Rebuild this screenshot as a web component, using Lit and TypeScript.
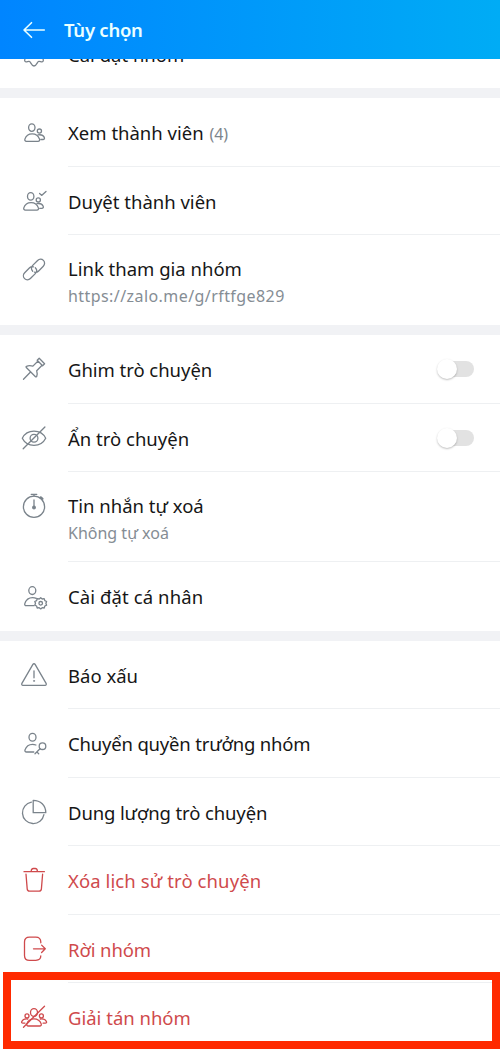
import { LitElement, html, css, svg, nothing } from "lit";
import { customElement, property } from "lit/decorators.js";

const person = (x: number, y: number) => svg`
  <ellipse cx=${11.8 + x} cy=${10.6 + y} rx="3.2" ry="3.7"/>
  <path transform="translate(${x} ${y})" d="M6.4 24.300h11.600c1.400 0 2-1 1.500-2.200-1.100-3.200-3.900-5.200-7.300-5.200s-6.300 2-7.300 5.200c-.4 1.200.3 2.200 1.500 2.200z"/>
  <circle cx=${19.4 + x} cy=${14.1 + y} r="2.1"/>
  <path transform="translate(${x} ${y})" d="M18 17.900c3.300-.6 5.400.6 6.300 2.500.5 1.200-.1 2.100-1.300 2.100h-2.200"/>`;

const icons: Record<string, unknown> = {
  settings: svg`<circle cx="14" cy="15.500" r="3.500"/><path d="M14 4.300c1.800 0 2 3.400 3.600 3.800 1.500.4 4.200-1 5.300.4 1.100 1.500-1 3-.6 4.400.3 1.200 1.400 1.400 1.400 2.900s-.9 1.900-.9 2.900c0 1.300 1.200 2.500.2 3.700-1.100 1.300-3.600-.9-4.700.1-1.200 1-1.900 4.500-4.300 4.500s-3.100-3.500-4.300-4.500c-1.100-1-3.600 1.200-4.700-.1-1-1.200.2-2.400.2-3.700 0-1-.9-1.400-.9-2.900s1.100-1.700 1.400-2.900c.4-1.400-1.700-2.900-.6-4.400 1.100-1.400 3.800 0 5.300-.4C12 7.700 12.200 4.300 14 4.300z"/>`,
  members: person(0, 0),
  approve: svg`${person(-1.1, -0.2)}<path d="M19.600 7.500l2 1.900 4.400-4"/>`,
  link: svg`<path d="M12.700 17.300c-1.700-1.700-1.700-4.200 0-5.900l4.900-4.900c1.700-1.700 4.200-1.700 5.800-.1s1.600 4.200-.1 5.900l-4.900 4.900c-1.100 1.100-2.600 1.400-3.900 1M15.300 13.700c1.700 1.700 1.700 4.200 0 5.900l-4.900 4.900c-1.700 1.700-4.200 1.700-5.800.1s-1.600-4.200.1-5.900l4.900-4.900c1.100-1.100 2.600-1.400 3.900-1"/>`,
  pin: svg`<path d="M19.200 4.300l5.400 5.400-2 2-5.400-5.400zM17.800 7.200l-4.900 4.900c-2-.6-4.700-.6-6.500.2-.5.200-.5.800-.1 1.200l9.200 9.200c.4.400 1 .3 1.200-.2.600-1.900.6-3.900 0-5.800l4.900-4.900M10.300 18.300l-6.800 6.900"/>`,
  hidden: svg`<path d="M2.300 15.200c2.400-4.800 6.600-7.100 11.700-7.100s9.300 2.300 11.700 7.100c-2.400 4.800-6.600 7.100-11.700 7.100s-9.300-2.300-11.700-7.100z"/><circle cx="14" cy="15.200" r="3.900"/><path d="M3.200 25.700L24.900 4"/>`,
  timer: svg`<circle cx="14" cy="15.800" r="10.600"/><path d="M11.200 3.300h5.600M14 3.300v1.700M14 9v7"/><path d="M20.800 6.300l1.700 1.500" stroke-width="2.200"/><circle cx="14" cy="16.500" r="1.300" fill="currentColor"/>`,
  personal: svg`<ellipse cx="12.300" cy="9.600" rx="3.500" ry="3.900"/><path d="M14 24.700H6.300c-1.200 0-1.900-.9-1.500-2.100 1.300-3.900 4.300-6 7.700-6 1.500 0 2.800.3 3.800.8"/><path d="M20.700 16.700l1.500 1.300 2-.3.600 1.900 1.800.9-.7 1.800.7 1.900-1.800.8-.6 2-2-.3-1.500 1.200-1.500-1.200-2 .3-.6-2-1.800-.8.700-1.900-.7-1.800 1.800-.9.600-1.900 2 .3z"/><circle cx="20.700" cy="22.300" r="1.800"/>`,
  report: svg`<path d="M12.900 4.400c.5-.9 1.700-.9 2.200 0l11 19c.5.900 0 1.900-1 1.900H2.900c-1 0-1.500-1-1-1.900zM14 10.800v7"/><circle cx="14" cy="20.900" r=".6" fill="currentColor" stroke-width=".6"/>`,
  transfer: svg`<ellipse cx="12.500" cy="9.200" rx="3.500" ry="3.900"/><path d="M13.800 24H6.500c-1.200 0-1.900-.9-1.500-2.100 1.300-3.800 4.200-5.600 7.500-5.600 1.300 0 2.300.2 3.400.7"/><circle cx="22.500" cy="18.200" r="3.300"/><path d="M20 20.700l-5 5M16.800 23.900l1.900 1.900"/>`,
  storage: svg`<path d="M11.400 5.100a10.800 10.800 0 1 0 12.500 12.500M13.200 3.300v12.400h12.600C25.800 8.500 20.500 3.300 13.200 3.300z"/>`,
  trash: svg`<path d="M4 6.700h20.400M11.200 6.500c0-2 .8-3 2.200-3h1.800c1.400 0 2.200 1 2.200 3M6 9.200l1.200 14.700c.1 1.400 1 2.200 2.300 2.200h9.600c1.300 0 2.200-.8 2.300-2.200L22.600 9.200"/>`,
  leave: svg`<path d="M20.800 8.800V8c0-3.200-1.800-4.900-5-4.900H9.500c-3.200 0-5 1.700-5 4.900v13.400c0 3.200 1.800 4.900 5 4.900h6.300c3.200 0 5-1.700 5-4.500M13.500 14.800h11.800M21.600 11.100l3.700 3.700-3.700 3.700"/>`,
  disband: svg`<ellipse cx="14" cy="10.500" rx="3.500" ry="3.900"/><path d="M8.300 24h11.400c1.300 0 1.900-.9 1.500-2.100-1.100-3.200-3.800-5.100-7.200-5.100s-6.100 1.900-7.200 5.100c-.4 1.200.2 2.100 1.500 2.100z"/><circle cx="7" cy="13.900" r="2"/><circle cx="21.400" cy="13.900" r="2"/><path d="M4.900 21.200H2.800c-1 0-1.400-.7-1-1.700.9-1.900 3-3 6-2.500M23.100 21.200h2.300c1 0 1.400-.7 1-1.700-.9-1.900-3-3-6.200-2.500M3.500 25.200L24.500 4.200"/>`,
};

interface Option {
  icon: string;
  label: string;
  count?: string;
  note?: string;
  toggle?: boolean;
  danger?: boolean;
  url?: boolean;
  /** Letter spacing of the label, in px. */
  tracking?: number;
}

const sections: Option[][] = [
  [{ icon: "settings", label: "Cài đặt nhóm" }],
  [
    { icon: "members", label: "Xem thành viên", count: "(4)" },
    { icon: "approve", label: "Duyệt thành viên" },
    { icon: "link", label: "Link tham gia nhóm", note: "https://zalo.me/g/rftfge829", url: true },
  ],
  [
    { icon: "pin", label: "Ghim trò chuyện", toggle: true, tracking: -0.04 },
    { icon: "hidden", label: "Ẩn trò chuyện", toggle: true },
    { icon: "timer", label: "Tin nhắn tự xoá", note: "Không tự xoá" },
    { icon: "personal", label: "Cài đặt cá nhân", tracking: 0.1 },
  ],
  [
    { icon: "report", label: "Báo xấu" },
    { icon: "transfer", label: "Chuyển quyền trưởng nhóm", tracking: -0.18 },
    { icon: "storage", label: "Dung lượng trò chuyện", tracking: -0.12 },
    { icon: "trash", label: "Xóa lịch sử trò chuyện", danger: true, tracking: 0.1 },
    { icon: "leave", label: "Rời nhóm", danger: true, tracking: -0.1 },
    { icon: "disband", label: "Giải tán nhóm", danger: true },
  ],
];

@customElement("option-row")
class OptionRow extends LitElement {
  @property({ attribute: false }) option!: Option;

  static styles = css`
    :host { display: block; }
    .row { display: flex; height: 68.5px; padding-left: 20px; box-sizing: border-box; color: #161616; }
    .tall { height: 90px; }
    .icon { flex: none; width: 28px; height: 30px; margin-top: 19px; color: #7a838b; fill: none; stroke: currentColor; stroke-width: 1.3; stroke-linecap: round; stroke-linejoin: round; overflow: visible; }
    .body { flex: 1; display: flex; justify-content: space-between; margin-left: 20px; padding-right: 26px; border-bottom: 1px solid #eef0f2; }
    :host([last]) .body { border-bottom-color: transparent; }
    .text { display: flex; flex-direction: column; padding-top: 21px; white-space: nowrap; }
    .tall .text { padding-top: 20px; }
    .label { font-size: 18.5px; line-height: 27px; }
    .count { font-size: 16px; color: #7c858c; margin-left: 1px; }
    .note { font-size: 16px; line-height: 29px; color: #858d94; }
    .url { letter-spacing: 0.43px; }
    .danger, .danger .icon { color: #cf4a4c; }
    .switch { width: 36px; height: 16px; margin-top: 26px; border-radius: 8px; background: #e2e2e2; display: flex; align-items: center; }
    .knob { flex: none; width: 20px; height: 20px; margin-left: -1.5px; border-radius: 50%; background: #fff; box-shadow: 0 1px 2px rgba(0, 0, 0, 0.25); }
  `;

  render() {
    const o = this.option;
    return html`<div class="row ${o.note ? "tall" : ""} ${o.danger ? "danger" : ""}">
      <svg class="icon" viewBox="0 0 28 30">${icons[o.icon]}</svg>
      <div class="body">
        <div class="text">
          <span class="label" style="letter-spacing:${o.tracking ?? 0}px">${o.label}${o.count ? html` <span class="count">${o.count}</span>` : nothing}</span>
          ${o.note ? html`<span class="note ${o.url ? "url" : ""}">${o.note}</span>` : nothing}
        </div>
        ${o.toggle ? html`<div class="switch"><div class="knob"></div></div>` : nothing}
      </div>
    </div>`;
  }
}

@customElement("app-root")
class AppRoot extends LitElement {
  static styles = css`
    :host { display: block; position: relative; height: 1051px; overflow: hidden; background: #fff; font-family: "Noto Sans", "Open Sans", sans-serif; }
    .bar { position: relative; z-index: 1; display: flex; align-items: center; height: 58.5px; box-sizing: border-box; padding: 2px 0 0 20px; color: #eaffff; background: linear-gradient(90deg, #0085ff, #00acf5); }
    .back { width: 28px; height: 20px; fill: none; stroke: currentColor; stroke-width: 1.6; stroke-linecap: round; stroke-linejoin: round; }
    .title { margin: 0 0 0 16px; font-size: 18.5px; line-height: 26px; font-weight: 600; letter-spacing: -0.25px; }
    .list { margin-top: -38.75px; }
    .section + .section { border-top: 10px solid #f1f2f5; }
    .highlight { position: absolute; z-index: 2; left: 3px; right: 0; top: 972px; height: 77px; box-sizing: border-box; border: 8px solid #ff2a00; }
  `;

  render() {
    return html`
      <header class="bar">
        <svg class="back" viewBox="0 0 28 20"><path d="M4 10h20.300M11.500 2.700L4 10l7.500 7.300"/></svg>
        <h1 class="title">Tùy chọn</h1>
      </header>
      <main class="list">
        ${sections.map((s) => html`<section class="section">
          ${s.map((o, i) => html`<option-row .option=${o} ?last=${i === s.length - 1}></option-row>`)}
        </section>`)}
      </main>
      <div class="highlight"></div>
    `;
  }
}
